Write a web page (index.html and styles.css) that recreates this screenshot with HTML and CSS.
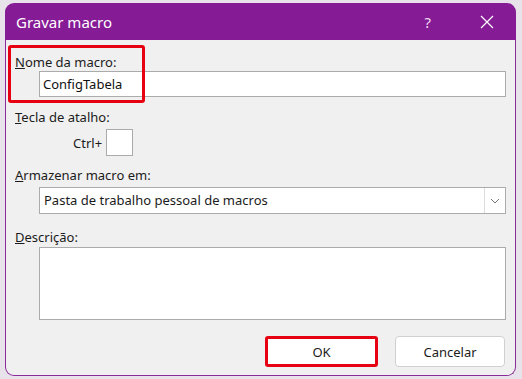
FILE: index.html
```html
<!DOCTYPE html>
<html lang="pt">
  <head>
    <meta charset="UTF-8" />
    <meta name="viewport" content="width=device-width, initial-scale=1.0" />
    <title>Gravar macro</title>
    <link rel="stylesheet" href="styles.css">
  </head>
  <body>
    <div class="dialog">
      <div class="titlebar">
        <span class="title">Gravar macro</span>
        <span class="help">?</span>
        <span class="close">
          <svg width="14" height="14" viewBox="0 0 14 14">
            <path d="M1 1 L13 13 M13 1 L1 13" stroke="#fff" stroke-width="1.2" fill="none" />
          </svg>
        </span>
      </div>

      <div class="content">
        <div class="mark"></div>

        <label class="label"><u>N</u>ome da macro:</label>
        <input class="field" type="text" value="ConfigTabela" />

        <label class="label gap-lg"><u>T</u>ecla de atalho:</label>
        <div class="shortcut">
          <span>Ctrl+</span>
          <input class="key" type="text" />
        </div>

        <label class="label gap-md"><u>A</u>rmazenar macro em:</label>
        <div class="select">
          <span class="select-text">Pasta de trabalho pessoal de macros</span>
          <span class="select-btn">
            <svg width="10" height="6" viewBox="0 0 10 6">
              <path d="M1 1 L5 5 L9 1" stroke="#777" stroke-width="1" fill="none" />
            </svg>
          </span>
        </div>

        <label class="label gap-xl"><u>D</u>escrição:</label>
        <textarea class="desc"></textarea>

        <div class="buttons">
          <button class="btn ok">OK</button>
          <button class="btn">Cancelar</button>
        </div>
      </div>
    </div>
  </body>
</html>
```

FILE: styles.css
```css
body {
  margin: 0;
  background: #e8e3eb;
  font-family: "Noto Sans", "Open Sans", sans-serif;
  font-size: 13px;
  color: #1b1b1b;
}
.dialog {
  width: 511px;
  margin: 3px 0 0 5px;
}
.titlebar {
  height: 37px;
  background: #861b96;
  border-radius: 9px 9px 0 0;
  display: flex;
  align-items: center;
  color: #fff;
}
.title {
  font-size: 15px;
  margin-left: 11px;
  flex: 1;
}
.help {
  font-size: 15px;
  margin-right: 49px;
  color: #f0dcf3;
}
.close {
  display: flex;
  margin-right: 22px;
}
.content {
  position: relative;
  background: #f0f0f0;
  border: 1px solid #8a2b97;
  border-top: none;
  border-radius: 0 0 9px 9px;
  padding: 14px 9px 8px 9px;
  display: flex;
  flex-direction: column;
}
.mark {
  position: absolute;
  left: 2px;
  top: 5px;
  width: 131px;
  height: 52px;
  border: 3px solid #e60012;
  border-radius: 3px;
}
.label {
  display: block;
  height: 16px;
  line-height: 16px;
}
.gap-lg {
  margin-top: 12px;
}
.gap-md {
  margin-top: 11px;
}
.gap-xl {
  margin-top: 15px;
}
.field {
  margin: 1px 0 0 24px;
  height: 26px;
  box-sizing: border-box;
  border: 1px solid #ababab;
  background: #fff;
  padding: 0 0 0 3px;
  font: inherit;
  font-size: 13px;
  color: #111;
}
.shortcut {
  display: flex;
  align-items: center;
  margin: 4px 0 0 58px;
  gap: 4px;
}
.key {
  width: 27px;
  height: 27px;
  box-sizing: border-box;
  border: 1px solid #ababab;
  background: #fff;
  padding: 0;
}
.select {
  display: flex;
  margin: 4px 0 0 24px;
  height: 27px;
  box-sizing: border-box;
  border: 1px solid #ababab;
  background: #fff;
}
.select-text {
  flex: 1;
  line-height: 25px;
  padding-left: 4px;
}
.select-btn {
  width: 20px;
  border-left: 1px solid #dcdcdc;
  display: flex;
  align-items: center;
  justify-content: center;
}
.desc {
  margin: 2px 0 0 24px;
  height: 73px;
  box-sizing: border-box;
  border: 1px solid #ababab;
  background: #fff;
  resize: none;
}
.buttons {
  display: flex;
  justify-content: flex-end;
  gap: 17px;
  margin-top: 16px;
  margin-right: 1px;
}
.btn {
  width: 110px;
  height: 31px;
  background: #fff;
  border: 1px solid #d0d0d0;
  border-radius: 4px;
  font: inherit;
  font-size: 13px;
  color: #1b1b1b;
}
.ok {
  width: 113px;
  border: 3px solid #e60012;
  border-radius: 3px;
}
```
